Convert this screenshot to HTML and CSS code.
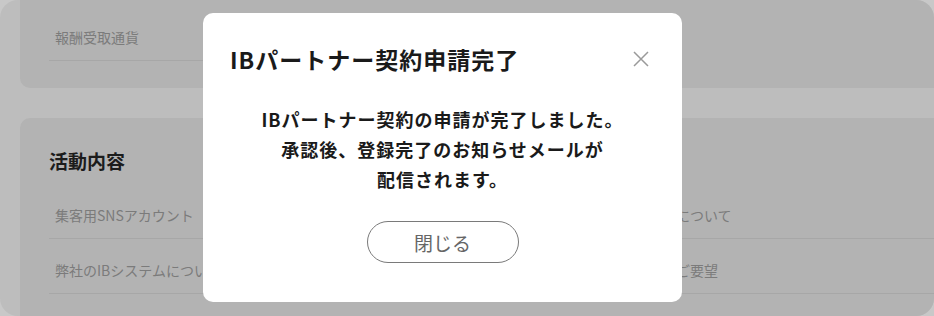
FILE: index.html
```html
<!DOCTYPE html>
<html lang="ja">
<head>
<meta charset="utf-8">
<title>IBパートナー契約申請完了</title>
<link rel="stylesheet" href="styles.css">
</head>
<body>
<div class="frame">
  <div class="cards">
    <section class="card card-top">
      <div class="grid">
        <div class="row"><span>報酬受取通貨</span></div>
        <div class="row empty"></div>
      </div>
    </section>
    <section class="card card-main">
      <h2 class="heading">活動内容</h2>
      <div class="grid">
        <div class="row"><span>集客用SNSアカウント</span></div>
        <div class="row"><span>集客に関するサポート体制について</span></div>
        <div class="row"><span>弊社のIBシステムについて</span></div>
        <div class="row"><span>その他、弊社サービスへのご要望</span></div>
        <div class="row"><span>活動予定地域</span></div>
        <div class="row"><span>備考</span></div>
      </div>
    </section>
  </div>

  <div class="modal" role="dialog" aria-labelledby="modal-title">
    <div class="modal-head">
      <h1 id="modal-title" class="modal-title">IBパートナー契約申請完了</h1>
      <button class="close" aria-label="閉じる">
        <svg width="16" height="16" viewBox="0 0 16 16"><path d="M1 1 L15 15 M15 1 L1 15" stroke="#9a9a9a" stroke-width="1.5" fill="none"/></svg>
      </button>
    </div>
    <p class="modal-body">IBパートナー契約の申請が完了しました。<br>承認後、登録完了のお知らせメールが<br>配信されます。</p>
    <div class="modal-foot">
      <button class="btn">閉じる</button>
    </div>
  </div>
</div>
</body>
</html>
```

FILE: styles.css
```css
html, body {
  margin: 0;
  padding: 0;
}
body {
  background: #c8c8c8;
  font-family: "Noto Sans CJK JP", "Noto Sans", sans-serif;
  width: 934px;
  height: 316px;
  overflow: hidden;
}
.frame {
  position: relative;
  width: 934px;
  height: 316px;
  border-radius: 18px;
  overflow: hidden;
  background: #bdbdbd;
}
.cards {
  display: flex;
  flex-direction: column;
  gap: 30px;
  padding-left: 20px;
  margin-top: -20px;
  width: 960px;
}
.card {
  background: #b3b3b3;
  border-radius: 10px;
  padding: 0 0 0 29px;
}
.card-top {
  padding-top: 26px;
  padding-bottom: 27px;
}
.card-main {
  padding-top: 31px;
  padding-bottom: 20px;
}
.heading {
  margin: 0 0 11px;
  font-size: 19px;
  line-height: 24px;
  font-weight: 700;
  color: #1c1c1c;
}
.grid {
  display: grid;
  grid-template-columns: 408px 440px;
  column-gap: 45px;
}
.row {
  padding: 21px 6px 13px;
  border-bottom: 1px solid #a7a7a7;
  font-size: 14px;
  line-height: 20px;
  color: #7b7b7b;
  white-space: nowrap;
}
.card-top .row.empty {
  border-bottom: none;
}

.modal {
  position: absolute;
  left: 203px;
  top: 13px;
  width: 479px;
  height: 289px;
  box-sizing: border-box;
  background: #fff;
  border-radius: 10px;
  padding: 0 27px;
  display: flex;
  flex-direction: column;
}
.modal-head {
  display: flex;
  align-items: center;
  justify-content: space-between;
  height: 91px;
}
.modal-title {
  margin: 0;
  font-size: 23px;
  line-height: 30px;
  font-weight: 700;
  color: #1a1a1a;
  letter-spacing: 1px;
}
.close {
  border: none;
  background: none;
  padding: 0;
  margin-right: 6px;
  width: 16px;
  height: 16px;
  display: flex;
}
.modal-body {
  margin: 0;
  text-align: center;
  font-size: 18px;
  line-height: 30px;
  font-weight: 700;
  color: #1a1a1a;
  letter-spacing: 1px;
}
.modal-foot {
  display: flex;
  justify-content: center;
  margin-top: 27px;
}
.btn {
  width: 152px;
  height: 42px;
  border: 1px solid #7a7a7a;
  border-radius: 21px;
  background: #fff;
  font-family: inherit;
  font-size: 19px;
  color: #666;
  padding: 0;
}
```
